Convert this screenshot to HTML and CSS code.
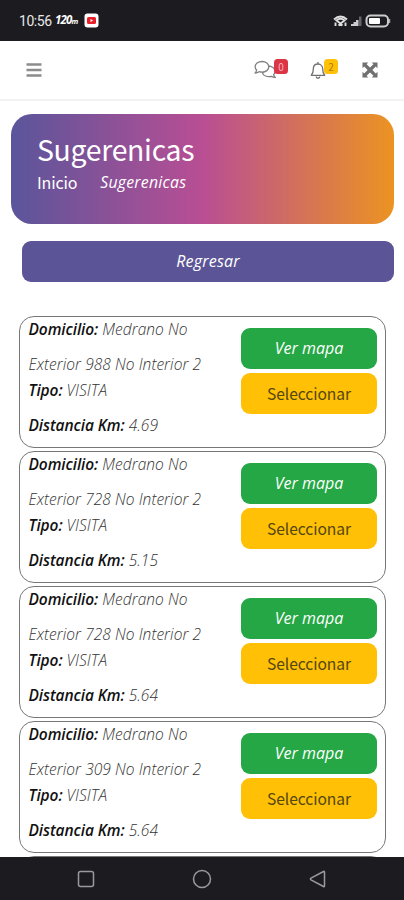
FILE: index.html
```html
<!DOCTYPE html>
<html lang="es">
<head>
<meta charset="utf-8">
<title>Sugerenicas</title>
<link rel="stylesheet" href="styles.css">
</head>
<body>
<div class="phone">
  <header class="status">
    <span class="clock">10:56</span>
    <span class="rate">120<small>m</small></span>
    <svg class="video" width="15" height="15" viewBox="0 0 15 15"><rect x=".5" y=".5" width="14" height="14" rx="3" fill="#fff"/><rect x="3" y="4" width="9" height="7" rx="1.5" fill="#e8202a"/><path d="M6.5 6v3l2.6-1.5z" fill="#fff"/></svg>
    <svg class="signal" width="58" height="16" viewBox="0 0 58 16" fill="none" stroke="#ddd">
      <path d="M1 6.500Q7.500 .5 14 6.500M3.500 7.500Q7.500 4 11.500 7.500L7.500 10.500Z" stroke-width="1.900"/>
      <path d="M2.500 13V9.500M12.500 13V9.500M5.500 12.500L7.500 11l2 1.500" stroke-width="1.900"/>
      <path d="M18 13v-2h2.500V9H23V7h2.500v6z" fill="#ccc" stroke="none"/>
      <path d="M26 13V3.500h2.500V13z" fill="#66656a" stroke="none"/>
      <rect x="33.500" y="2.500" width="21.500" height="11" rx="4" stroke="#ccc" stroke-width="2"/>
      <rect x="36" y="5" width="11" height="6" rx="1" fill="#fff" stroke="none"/>
      <path d="M56.700 6v4" stroke="#ccc"/>
    </svg>
  </header>
  <nav class="topbar">
    <svg class="menu" width="16" height="16" viewBox="0 0 16 16"><path d="M.5 2.500h15M.5 8h15M.5 13.500h15" stroke="#8c8c8c" stroke-width="2.400"/></svg>
    <div class="tool chat">
      <svg width="23" height="20" viewBox="0 0 23 20" fill="#fff" stroke="#808080" stroke-width="1.300" stroke-linejoin="round"><path d="M14 6c4 0 7 2.300 7 5.500 0 1.400-.6 2.400-1.400 3.300.3 1.100 1 1.900 1.700 2.700-1.700 0-3.100-.5-4.100-1.200-4.200.9-7.700-.7-8.700-3.300z"/><path d="M8 1.500c4 0 6.800 2.300 6.800 5.300S12 12.200 8 12.200c-1 0-2-.2-2.900-.5-1 .8-2.400 1.300-4 1.300.8-.8 1.400-1.700 1.600-2.800C1.700 9.200 1.100 8.100 1.100 6.800c0-3 2.900-5.300 6.900-5.300z"/></svg>
      <b class="badge red">0</b>
    </div>
    <div class="tool bell">
      <svg width="16" height="19" viewBox="0 0 16 19" fill="none" stroke="#707070" stroke-width="1.300" stroke-linejoin="round"><path d="M8 1v2M1.300 14.300C3 12.500 3.300 11 3.300 8 3.300 5 5.300 3 8 3s4.700 2 4.700 5c0 3 .3 4.500 2 6.300zM6.200 15.500c.2 2.300 3.400 2.300 3.600 0"/></svg>
      <b class="badge amber">2</b>
    </div>
    <svg class="expand" width="16" height="16" viewBox="0 0 16 16"><path d="M.5.500h5.700L4.600 2.200 8 5.600l3.400-3.400L9.800.500h5.700v5.700l-1.700-1.600L10.400 8l3.400 3.400 1.700-1.600v5.700H9.800l1.600-1.700L8 10.400l-3.400 3.400 1.600 1.700H.5V9.800l1.700 1.600L5.600 8 2.200 4.600.500 6.200z" fill="#707070"/></svg>
  </nav>
  <main>
    <section class="hero">
      <h1>Sugerenicas</h1>
      <div class="crumbs"><span>Inicio</span><em>Sugerenicas</em></div>
    </section>
    <button class="back">Regresar</button>
    <div class="list">
      <article class="card">
        <div class="info"><p><b>Domicilio:</b> Medrano No<br><span class="addr">Exterior 988 No Interior 2</span></p><p><b class="type">Tipo:</b> <span class="visit">VISITA</span><br><b>Distancia Km:</b> 4.69</p></div>
        <div class="actions"><button class="map">Ver mapa</button><button class="pick">Seleccionar</button></div>
      </article>
      <article class="card">
        <div class="info"><p><b>Domicilio:</b> Medrano No<br><span class="addr">Exterior 728 No Interior 2</span></p><p><b class="type">Tipo:</b> <span class="visit">VISITA</span><br><b>Distancia Km:</b> 5.15</p></div>
        <div class="actions"><button class="map">Ver mapa</button><button class="pick">Seleccionar</button></div>
      </article>
      <article class="card">
        <div class="info"><p><b>Domicilio:</b> Medrano No<br><span class="addr">Exterior 728 No Interior 2</span></p><p><b class="type">Tipo:</b> <span class="visit">VISITA</span><br><b>Distancia Km:</b> 5.64</p></div>
        <div class="actions"><button class="map">Ver mapa</button><button class="pick">Seleccionar</button></div>
      </article>
      <article class="card">
        <div class="info"><p><b>Domicilio:</b> Medrano No<br><span class="addr">Exterior 309 No Interior 2</span></p><p><b class="type">Tipo:</b> <span class="visit">VISITA</span><br><b>Distancia Km:</b> 5.64</p></div>
        <div class="actions"><button class="map">Ver mapa</button><button class="pick">Seleccionar</button></div>
      </article>
      <article class="card"></article>
    </div>
  </main>
  <footer class="keys">
    <svg width="18" height="18" viewBox="0 0 18 18"><rect x="1.500" y="1.500" width="15" height="15" rx="2"/></svg>
    <svg width="20" height="20" viewBox="0 0 20 20"><circle cx="10" cy="10" r="8.500"/></svg>
    <svg width="18" height="18" viewBox="0 0 18 18"><path d="M15.500 2v14q0 1-1 .5L2 9.800q-1.200-.8 0-1.600L14.500 1.500q1-.5 1 .5z"/></svg>
  </footer>
</div>
</body>
</html>
```

FILE: styles.css
```css
* { box-sizing: border-box; }
body { margin: 0; background: #fff; font-family: "Noto Sans CJK SC", "Noto Sans", sans-serif; }
svg { display: block; flex: none; }
.phone { width: 404px; height: 900px; overflow: hidden; display: flex; flex-direction: column; }
.status { height: 41px; flex: none; background: #1c1b20; color: #e8e8e8; display: flex; align-items: center; padding: 0 13px 0 19px; }
.clock { font: 14px/20px Roboto, sans-serif; width: 36px; letter-spacing: -.45px; white-space: nowrap; }
.rate { font: italic bold 11.5px/20px "Open Sans", sans-serif; letter-spacing: -.8px; width: 29px; color: #fff; white-space: nowrap; }
.rate small { font-size: 7.5px; }
.signal { margin-left: auto; }
.topbar { height: 60px; flex: none; display: flex; align-items: center; padding: 0 26px; border-bottom: 2px solid #f3f3f3; }
.tool { position: relative; }
.menu { margin-right: auto; }
.chat { width: 56px; }
.bell { width: 52px; }
.badge { position: absolute; top: -1px; width: 14px; height: 15px; border-radius: 3.5px; font: 10px/15px "Noto Sans CJK SC", sans-serif; text-align: center; }
.chat .badge { left: 20px; }
.bell .badge { left: 14px; top: -2px; }
.red { background: #dc3545; color: #f5b4bc; }
.amber { background: #ffc107; color: #a77d00; }
main { flex: 1; min-height: 0; overflow: hidden; padding: 12.5px 10px 0 11px; }
.hero { height: 110px; border-radius: 21px; background: linear-gradient(90deg, #5a559b, #b94e94 50%, #ec9322); color: #fff; padding: 13px 26px; }
h1 { margin: 0; font-size: 28.4px; line-height: 43px; font-weight: 400; letter-spacing: -.3px; }
.crumbs { display: flex; gap: 23px; line-height: 24px; font-size: 16px; letter-spacing: -.15px; }
.crumbs em { font: italic 15.8px/24px "Open Sans", sans-serif; letter-spacing: .25px; }
button { display: block; border: 0; padding: 0; width: 100%; height: 41px; border-radius: 9px; color: #fff; font: italic 16px/41px "Open Sans", sans-serif; }
.back { width: 372px; margin: 17px 0 34px 11px; background: #5b5597; letter-spacing: .2px; }
.list { display: grid; gap: 3px; padding: 0 8px 0 7.5px; }
.card { height: 132px; border: 1px solid #777; border-radius: 15px; display: flex; justify-content: space-between; padding: 0 8px 0 9px; }
.info { margin-top: -4.5px; color: #333; font: italic 300 15.5px/35px "Open Sans", sans-serif; white-space: nowrap; }
.info p { margin: 0 0 -9px; letter-spacing: .07px; }
.info b { font-weight: 600; color: #111; letter-spacing: -.08px; }
.actions { width: 136px; padding-top: 11px; display: grid; gap: 4px; align-content: start; }
.map { background: #24a744; }
.pick { background: #ffc006; color: #54470f; font: 15.6px/40px "Noto Sans CJK SC", sans-serif; letter-spacing: -.05px; }
.keys { height: 43px; flex: none; background: #1c1b20; display: flex; justify-content: space-between; align-items: center; padding: 0 77px; }
.keys svg { fill: none; stroke: #9a9a9d; stroke-width: 1.5; }
```
